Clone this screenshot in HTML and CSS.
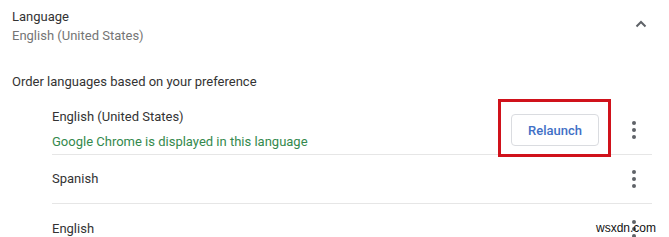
FILE: index.html
```html
<!DOCTYPE html>
<html>
  <head>
    <meta charset="utf-8" />
    <link rel="stylesheet" href="styles.css">
    <title>Language settings</title>
  </head>
  <body>
    <div class="section">

      <div class="head">
        <div class="head-text">
          <div class="label">Language</div>
          <div class="sub">English (United States)</div>
        </div>
        <span class="chevron">
          <svg width="12" height="8" viewBox="0 0 12 8"><path d="M1.5 6.5 L6 2 L10.5 6.5" fill="none" stroke="#5f6368" stroke-width="2"/></svg>
        </span>
      </div>

      <div class="caption">Order languages based on your preference</div>

      <div class="list">
        <div class="row first">
          <div class="row-text">
            <div class="name">English (United States)</div>
            <div class="note">Google Chrome is displayed in this language</div>
          </div>
          <div class="actions">
            <div class="mark">
              <button class="relaunch">Relaunch</button>
              <span class="frame"></span>
            </div>
            <span class="kebab"><i></i><i></i><i></i></span>
          </div>
        </div>

        <div class="row">
          <div class="row-text">
            <div class="name">Spanish</div>
          </div>
          <div class="actions">
            <span class="kebab"><i></i><i></i><i></i></span>
          </div>
        </div>

        <div class="row last">
          <div class="row-text">
            <div class="name">English</div>
          </div>
          <div class="actions">
            <span class="kebab"><i></i><i></i><i></i></span>
          </div>
        </div>
      </div>

    </div>
    <span class="watermark">wsxdn.com</span>
  </body>
</html>
```

FILE: styles.css
```css
* {
  box-sizing: border-box;
}
html, body {
  margin: 0;
  background: #fff;
}
body {
  font-family: Roboto, "Liberation Sans", sans-serif;
  font-size: 13px;
  color: #333;
  width: 669px;
  height: 237px;
  overflow: hidden;
  position: relative;
}
.section {
  width: 652px;
  padding-left: 12px;
}
.head {
  display: flex;
  justify-content: space-between;
  padding-top: 7px;
}
.label, .sub, .caption, .name, .note {
  line-height: 20px;
}
.sub {
  color: #757575;
  margin-top: -1px;
}
.chevron {
  width: 22px;
  display: flex;
  justify-content: center;
  padding-top: 13px;
}
.caption {
  margin-top: 26px;
}
.list {
  margin-left: 40px;
  margin-top: 8px;
}
.row {
  display: flex;
  justify-content: space-between;
  border-bottom: 1px solid #e6e6e6;
  height: 49px;
  align-items: center;
}
.row.first {
  align-items: flex-start;
  height: 55px;
  padding-top: 7px;
}
.row.last {
  border-bottom: 0;
}
.note {
  color: #34894d;
  margin-top: 5px;
}
.actions {
  display: flex;
  align-items: center;
}
.first .actions {
  margin-top: 7px;
}
.mark {
  position: relative;
  margin-right: 23px;
}
.relaunch {
  font-family: Roboto, "Liberation Sans", sans-serif;
  font-size: 13px;
  font-weight: 500;
  color: #4170c6;
  background: #fff;
  border: 1px solid #dadce0;
  border-radius: 4px;
  width: 88px;
  height: 32px;
  padding: 0;
}
.frame {
  position: absolute;
  left: -13px;
  right: -12px;
  top: -15px;
  bottom: -11px;
  border: 3px solid #d0121b;
}
.kebab {
  width: 24px;
  height: 24px;
  display: flex;
  flex-direction: column;
  align-items: center;
  justify-content: center;
  gap: 3px;
  margin-right: 6px;
}
.kebab i {
  width: 4px;
  height: 4px;
  border-radius: 50%;
  background: #5f6368;
}
.watermark {
  position: absolute;
  left: 596px;
  top: 221px;
  font-family: "Liberation Sans", Arial, sans-serif;
  font-size: 12px;
  color: #111;
}
```
